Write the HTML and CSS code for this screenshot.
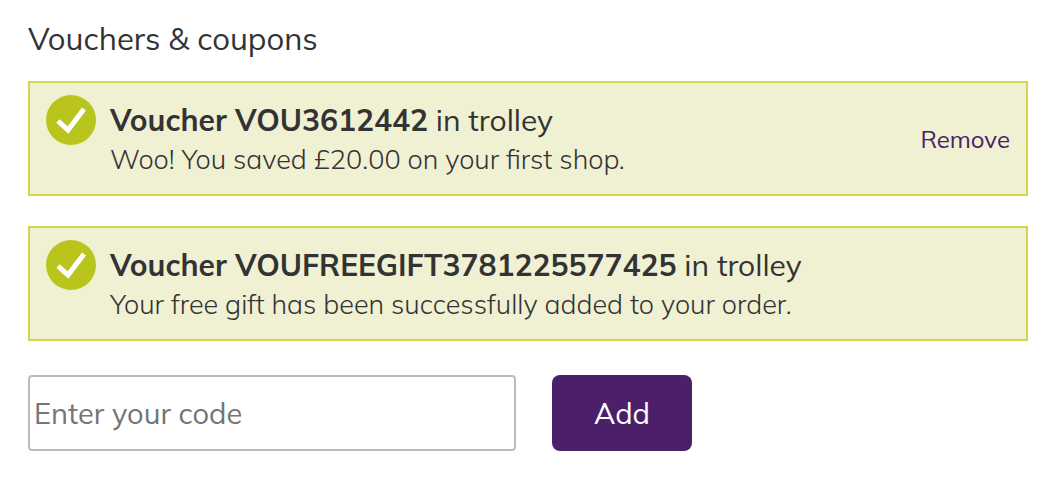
FILE: index.html
```html
<!DOCTYPE html>
<html lang="en">
<head>
    <meta charset="UTF-8">
    <meta name="viewport" content="width=device-width, initial-scale=1.0">
    <title>Vouchers &amp; coupons</title>
    <link rel="stylesheet" href="styles.css">
</head>
<body>
<h2>Vouchers &amp; coupons</h2>

<div class="voucher">
    <svg class="tick" viewBox="0 0 50 50" aria-hidden="true">
        <circle cx="25" cy="25" r="25" fill="#b9c41d"/>
        <path d="M12 26 L22 35 L38 14" fill="none" stroke="#fff" stroke-width="5"/>
    </svg>
    <div class="details">
        <p class="title"><strong>Voucher VOU3612442</strong> in trolley</p>
        <p class="message">Woo! You saved £20.00 on your first shop.</p>
    </div>
    <a class="remove" href="#">Remove</a>
</div>

<div class="voucher">
    <svg class="tick" viewBox="0 0 50 50" aria-hidden="true">
        <circle cx="25" cy="25" r="25" fill="#b9c41d"/>
        <path d="M12 26 L22 35 L38 14" fill="none" stroke="#fff" stroke-width="5"/>
    </svg>
    <div class="details">
        <p class="title"><strong>Voucher VOUFREEGIFT3781225577425</strong> in trolley</p>
        <p class="message">Your free gift has been successfully added to your order.</p>
    </div>
</div>

<form class="code-form">
    <input type="text" id="code" name="code" placeholder="Enter your code" aria-label="Voucher code">
    <button type="submit">Add</button>
</form>
</body>
</html>
```
FILE: styles.css
```css
* {
    box-sizing: border-box;
}

body {
    margin: 0;
    padding: 19px 32px 36px 28px;
    font-family: Mulish, Muli, Lato, "Open Sans", sans-serif;
    color: #333;
    background-color: #fff;
}

h2 {
    margin: 0 0 22px;
    font-size: 31px;
    line-height: 40px;
    font-weight: 400;
}

.voucher {
    display: flex;
    align-items: center;
    min-height: 115px;
    margin-bottom: 30px;
    padding: 12px 16px;
    background-color: #f0f0d3;
    border: 2px solid #d3d64b;
}

.tick {
    flex: none;
    align-self: flex-start;
    width: 50px;
    height: 50px;
    margin-right: 14px;
}

.details {
    flex: 1;
    padding-top: 2px;
}

.details p {
    margin: 0;
    line-height: 39px;
}

.title {
    font-size: 30px;
}

.message {
    font-size: 27px;
    font-weight: 300;
}

.remove {
    font-size: 24px;
    color: #4c2069;
    text-decoration: none;
}

.code-form {
    display: flex;
    gap: 36px;
    margin-top: 34px;
}

input {
    flex: 0 1 488px;
    min-width: 0;
    height: 76px;
    padding: 0 4px;
    font-family: inherit;
    font-size: 29px;
    color: #333;
    border: 2px solid #bbb;
    border-radius: 4px;
}

input::placeholder {
    color: #757575;
}

button {
    width: 140px;
    height: 76px;
    font-family: inherit;
    font-size: 29px;
    color: #fff;
    background-color: #4c2069;
    border: none;
    border-radius: 8px;
    cursor: pointer;
}
```
